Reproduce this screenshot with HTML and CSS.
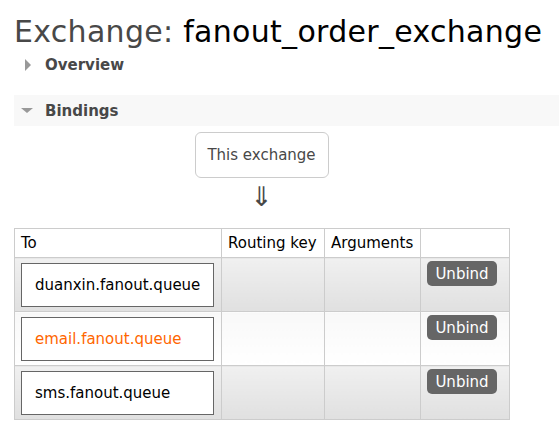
FILE: index.html
```html
<!DOCTYPE html>
<html>
<head>
<meta charset="utf-8">
<link rel="stylesheet" href="styles.css">
</head>
<body>
<div class="page">
  <h1 class="title">Exchange: <b class="name">fanout_order_exchange</b></h1>
  <div class="section">
    <div class="sec-head closed"><span class="tri tri-right"></span>Overview</div>
  </div>
  <div class="section">
    <div class="sec-head open"><span class="tri tri-down"></span>Bindings</div>
    <div class="sec-body">
      <div class="flow">
        <div class="this-ex">This exchange</div>
        <div class="arrow">&#8659;</div>
      </div>
      <table class="list">
        <thead>
          <tr><th class="c-to">To</th><th class="c-rk">Routing key</th><th class="c-args">Arguments</th><th class="c-act"></th></tr>
        </thead>
        <tbody>
          <tr class="alt1">
            <td><span class="queue">duanxin.fanout.queue</span></td><td></td><td></td>
            <td class="act"><button class="btn">Unbind</button></td>
          </tr>
          <tr class="alt2">
            <td><span class="queue hl">email.fanout.queue</span></td><td></td><td></td>
            <td class="act"><button class="btn">Unbind</button></td>
          </tr>
          <tr class="alt1">
            <td><span class="queue">sms.fanout.queue</span></td><td></td><td></td>
            <td class="act"><button class="btn">Unbind</button></td>
          </tr>
        </tbody>
      </table>
    </div>
  </div>
</div>
</body>
</html>
```

FILE: styles.css
```css
html, body {
  margin: 0;
  padding: 0;
  background: #fff;
}
body {
  font-family: "DejaVu Sans", Verdana, sans-serif;
  color: #000;
}
.page {
  padding-left: 14px;
}
.title {
  margin: 0;
  padding-top: 13px;
  font-size: 30px;
  letter-spacing: 0.3px;
  font-weight: normal;
  line-height: 37px;
  color: #484848;
  white-space: nowrap;
}
.title .name {
  font-weight: normal;
  color: #000;
}
.sec-head {
  display: flex;
  align-items: center;
  height: 31px;
  font-size: 15px;
  font-weight: bold;
  color: #484848;
}
.sec-head.closed {
  padding-left: 11px;
  height: 29px;
  margin-bottom: 16px;
}
.sec-head.open {
  background: #f8f8f8;
  padding-left: 7px;
}
.tri {
  display: inline-block;
  width: 0;
  height: 0;
}
.tri-right {
  border-top: 6px solid transparent;
  border-bottom: 6px solid transparent;
  border-left: 6px solid #999;
  margin-right: 14px;
}
.tri-down {
  border-left: 6px solid transparent;
  border-right: 6px solid transparent;
  border-top: 5px solid #999;
  margin-right: 12px;
}
.flow {
  width: 495px;
  display: flex;
  flex-direction: column;
  align-items: center;
  padding-top: 6px;
}
.this-ex {
  width: 132px;
  height: 44px;
  border: 1px solid #ccc;
  border-radius: 6px;
  display: flex;
  align-items: center;
  justify-content: center;
  font-size: 15px;
  color: #484848;
}
.arrow {
  font-size: 27px;
  line-height: 32px;
  height: 32px;
  color: #484848;
  margin-top: 3px;
}
.list {
  margin-top: 15px;
  border-collapse: collapse;
  font-size: 15px;
}
.list th {
  border: 1px solid #ccc;
  height: 28px;
  padding: 0 6px;
  text-align: left;
  font-weight: normal;
  background: #fff;
}
.list th.c-to { width: 194px; }
.list th.c-rk { width: 90px; }
.list th.c-args { width: 83px; }
.list th.c-act { width: 76px; }
.list td {
  border: 1px solid #ccc;
  height: 53px;
  padding: 0 6px;
  vertical-align: middle;
}
.list tr.alt1 td {
  background: linear-gradient(#f0f0f0, #e0e0e0);
}
.list tr.alt2 td {
  background: linear-gradient(#f8f8f8, #fff);
}
.queue {
  display: flex;
  align-items: center;
  box-sizing: border-box;
  width: 193px;
  height: 44px;
  border: 1px solid #666;
  background: #fff;
  padding-left: 13px;
  color: #000;
  font-size: 15px;
}
.queue.hl {
  color: #f60;
}
.list td.act {
  vertical-align: top;
}
.btn {
  display: block;
  width: 70px;
  height: 25px;
  margin-top: 3px;
  border: 0;
  border-radius: 5px;
  background: #666;
  color: #fff;
  font-family: "DejaVu Sans", Verdana, sans-serif;
  font-size: 15px;
  padding: 0;
}
```
